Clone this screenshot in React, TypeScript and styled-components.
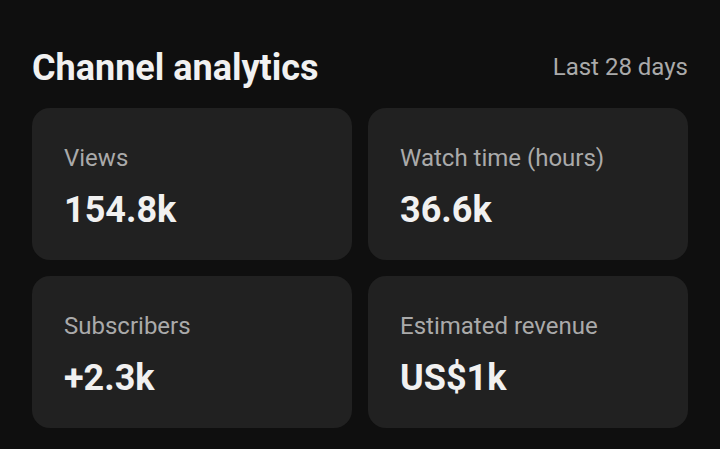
import styled, { createGlobalStyle } from "styled-components";

interface Metric {
  label: string;
  value: string;
}

const metrics: Metric[] = [
  { label: "Views", value: "154.8k" },
  { label: "Watch time (hours)", value: "36.6k" },
  { label: "Subscribers", value: "+2.3k" },
  { label: "Estimated revenue", value: "US$1k" },
];

const GlobalStyle = createGlobalStyle`
  html, body {
    margin: 0;
    background: #0f0f0f;
  }
  body {
    font-family: Roboto, "Liberation Sans", sans-serif;
    color: #f1f1f1;
  }
`;

const Container = styled.div`
  padding: 48px 32px 0;
`;

const Header = styled.header`
  display: flex;
  justify-content: space-between;
  align-items: center;
  margin-bottom: 20px;
`;

const Title = styled.h1`
  margin: 0;
  font-size: 36px;
  line-height: 40px;
  font-weight: 700;
  color: #f1f1f1;
`;

const Period = styled.span`
  font-size: 24px;
  line-height: 28px;
  color: #aaaaaa;
  margin-bottom: 2px;
`;

const Grid = styled.div`
  display: grid;
  grid-template-columns: 1fr 1fr;
  gap: 16px;
`;

const Card = styled.div`
  height: 152px;
  box-sizing: border-box;
  padding: 36px 32px 0;
  background: #212121;
  border-radius: 18px;
  display: flex;
  flex-direction: column;
  gap: 16px;
`;

const Label = styled.span`
  font-size: 24px;
  line-height: 28px;
  color: #aaaaaa;
`;

const Value = styled.span`
  font-size: 36px;
  line-height: 44px;
  font-weight: 700;
  color: #f1f1f1;
`;

function App() {
  return (
    <>
      <GlobalStyle />
      <Container>
        <Header>
          <Title>Channel analytics</Title>
          <Period>Last 28 days</Period>
        </Header>
        <Grid>
          {metrics.map((m) => (
            <Card key={m.label}>
              <Label>{m.label}</Label>
              <Value>{m.value}</Value>
            </Card>
          ))}
        </Grid>
      </Container>
    </>
  );
}

export default App;
